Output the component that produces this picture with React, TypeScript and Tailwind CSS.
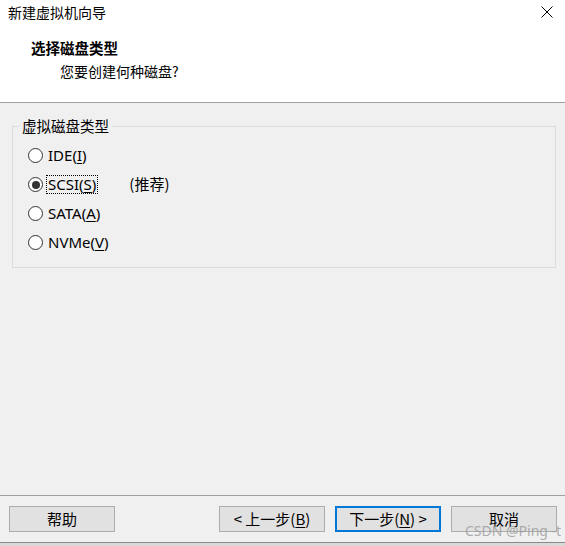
import React from 'react';

const cjk = { fontFamily: '"Noto Sans CJK SC", "Noto Sans", sans-serif' };
const latin = { fontFamily: '"Noto Sans", "Noto Sans CJK SC", sans-serif' };

// one radio row of the disk type group
const Radio: React.FC<{ label: string; hot: string; checked?: boolean; focused?: boolean; extra?: string }> = ({
  label,
  hot,
  checked,
  focused,
  extra,
}) => (
  <div className="flex h-[29px] items-center">
    <span className="flex h-[15px] w-[15px] items-center justify-center rounded-full border border-[#333] bg-white">
      {checked && <span className="h-[8px] w-[8px] rounded-full bg-[#333]" />}
    </span>
    <span
      className={`ml-[4px] px-[1px] text-[15px] leading-[17px] text-black ${
        focused ? 'outline-1 outline-dotted outline-black' : ''
      }`}
      style={latin}
    >
      {label}(<span className="underline underline-offset-2">{hot}</span>)
    </span>
    {extra && (
      <span className="ml-[32px] text-[15px] text-black" style={cjk}>
        {extra}
      </span>
    )}
  </div>
);

const Button: React.FC<{ primary?: boolean; children: React.ReactNode }> = ({ primary, children }) => (
  <div
    className={`flex h-[26px] w-[106px] items-center justify-center bg-[#e1e1e1] text-[15px] text-black ${
      primary ? 'border-2 border-[#0078d7]' : 'border border-[#adadad]'
    }`}
    style={cjk}
  >
    {children}
  </div>
);

export default function App() {
  return (
    <div className="relative flex h-[546px] w-[565px] flex-col bg-[#f0f0f0]" style={cjk}>
      {/* header */}
      <div className="h-[103px] border-b border-[#a0a0a0] bg-white">
        <div className="flex h-[24px] items-center justify-between pl-[8px] pr-[12px]">
          <span className="text-[14px] text-black">新建虚拟机向导</span>
          <svg width="12" height="12" viewBox="0 0 12 12">
            <path d="M0.5 0.5 L11.5 11.5 M11.5 0.5 L0.5 11.5" stroke="#000" strokeWidth="1" />
          </svg>
        </div>
        <div className="pl-[31px] pt-[14px] text-[14.5px] font-bold leading-[20px] text-black">选择磁盘类型</div>
        <div className="pl-[60px] pt-[3px] text-[14px] leading-[20px] text-black">您要创建何种磁盘?</div>
      </div>

      {/* body */}
      <div className="h-[392px] pl-[12px] pt-[23px]">
        <div className="relative h-[142px] w-[544px] border border-[#dcdcdc] pl-[15px] pt-[14px]">
          <span className="absolute -top-[11px] left-[6px] bg-[#f0f0f0] px-[3px] text-[14.5px] leading-[20px] text-black">
            虚拟磁盘类型
          </span>
          <Radio label="IDE" hot="I" />
          <Radio label="SCSI" hot="S" checked focused extra="(推荐)" />
          <Radio label="SATA" hot="A" />
          <Radio label="NVMe" hot="V" />
        </div>
      </div>

      {/* footer */}
      <div className="flex h-[48px] items-start border-y border-t-[#a0a0a0] border-b-[#8a8a8a] pl-[9px] pr-[8px] pt-[10px]">
        <Button>帮助</Button>
        <div className="ml-auto flex gap-[10px]">
          <Button>
            &lt; 上一步(<span className="underline underline-offset-2">B</span>)
          </Button>
          <Button primary>
            下一步(<span className="underline underline-offset-2">N</span>) &gt;
          </Button>
          <Button>取消</Button>
        </div>
      </div>
      <div className="h-[3px] bg-[#d9d9d9]" />

      {/* watermark */}
      <span
        className="absolute left-[465px] top-[522px] text-[14px] leading-[18px] text-[#9a9a9a]/80"
        style={latin}
      >
        CSDN @Ping -t
      </span>
    </div>
  );
}
